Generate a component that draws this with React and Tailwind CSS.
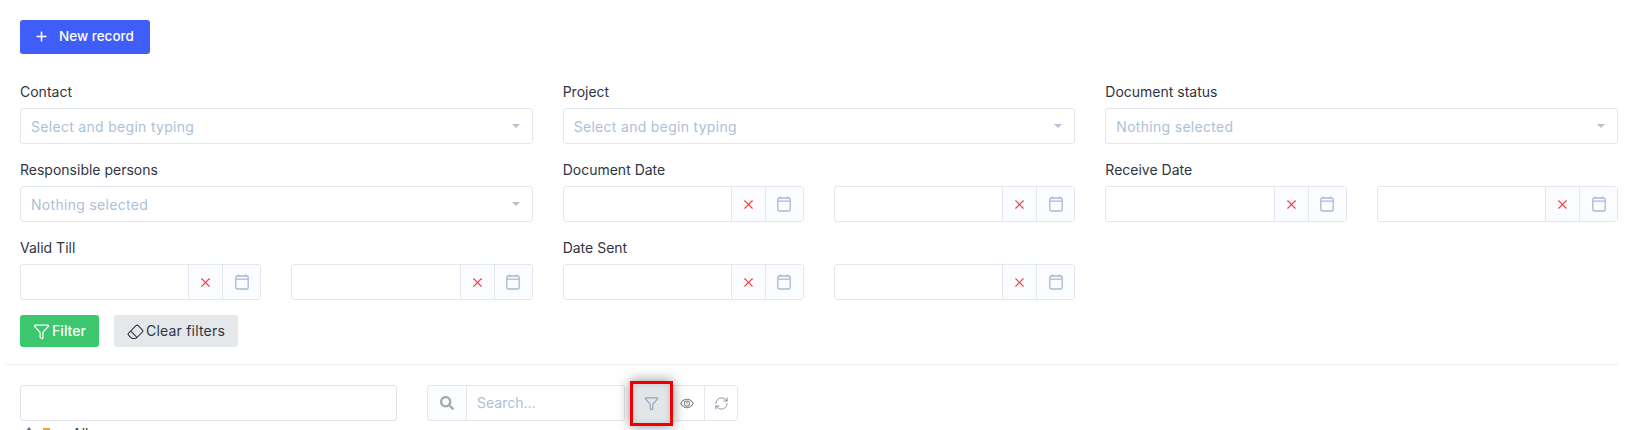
import React from "react";
import { Plus, X, Funnel, RefreshCw } from "lucide-react";
import { BsEraser } from "react-icons/bs";
import { FaSearch } from "react-icons/fa";

const CalendarIcon = () => (
  <svg width="14" height="16" viewBox="0 0 14 16" fill="none" stroke="#a9b8d4" strokeWidth="1.3">
    <rect x="0.8" y="2" width="12.4" height="13" rx="1.6" />
    <path d="M1 5.2h12M3.5 0.5v2M10.5 0.5v2" />
  </svg>
);

const EyeIcon = () => (
  <svg width="14" height="11" viewBox="0 0 15 12" fill="none" stroke="#7b828e" strokeWidth="1.1">
    <path d="M0.7 6C2.5 2.8 4.8 1.4 7.5 1.4s5 1.4 6.8 4.6c-1.8 3.2-4.1 4.6-6.8 4.6S2.5 9.2 0.7 6z" />
    <circle cx="7.5" cy="6" r="2.8" />
    <path d="M7.5 4v2.4" />
  </svg>
);

const Label = ({ children }) => (
  <label className="block h-[26px] text-sm leading-5 text-[#2f3542]">{children}</label>
);

const SelectBox = ({ text }) => (
  <div className="flex h-9 items-center justify-between rounded-[3px] border border-[#e3e8ee] bg-white pl-2.5 pr-3">
    <span className="pt-0.5 text-sm tracking-[0.3px] text-[#aebfd6]">{text}</span>
    <span className="h-0 w-0 border-x-[4px] border-t-[4px] border-x-transparent border-t-[#b6c2d2]" />
  </div>
);

const DateInput = () => (
  <div className="flex h-9 rounded-[3px] border border-[#e3e8ee] bg-white">
    <div className="flex-1" />
    <div className="flex w-[34px] items-center justify-center border-l border-[#e3e8ee] bg-[#fafcff]">
      <X size={15} color="#f4433f" strokeWidth={1.7} />
    </div>
    <div className="flex w-[38px] items-center justify-center border-l border-[#e3e8ee] bg-[#fafcff]">
      <CalendarIcon />
    </div>
  </div>
);

const DateRange = () => (
  <div className="grid grid-cols-2 gap-[30px]">
    <DateInput />
    <DateInput />
  </div>
);

const Field = ({ label, children }) => (
  <div className="mb-4">
    <Label>{label}</Label>
    {children}
  </div>
);

export default function App() {
  return (
    <div className="h-[430px] overflow-hidden bg-white font-['Inter','Liberation_Sans',sans-serif]">
      <div className="pl-5 pr-2.5 pt-5">
        <button className="flex h-[34px] w-[130px] items-center rounded-[3px] bg-[#3f5ef8] pb-px pl-[14px] text-[13.5px] font-medium text-white">
          <Plus size={15} strokeWidth={2.4} />
          <span className="ml-[10px]">New record</span>
        </button>

        {/* Filter fields */}
        <div className="mt-7 grid grid-cols-3 gap-x-[30px]">
          <Field label="Contact"><SelectBox text="Select and begin typing" /></Field>
          <Field label="Project"><SelectBox text="Select and begin typing" /></Field>
          <Field label="Document status"><SelectBox text="Nothing selected" /></Field>
          <Field label="Responsible persons"><SelectBox text="Nothing selected" /></Field>
          <Field label="Document Date"><DateRange /></Field>
          <Field label="Receive Date"><DateRange /></Field>
          <Field label="Valid Till"><DateRange /></Field>
          <Field label="Date Sent"><DateRange /></Field>
        </div>

        <div className="-mt-px flex gap-[15px]">
          <button className="flex h-8 w-[79px] items-center justify-center gap-0.5 rounded-[3px] bg-[#3cc76f] text-sm font-medium text-white">
            <Funnel size={17} strokeWidth={1.7} />
            Filter
          </button>
          <button className="flex h-8 w-[124px] items-center justify-center gap-0.5 rounded-[3px] bg-[#e4e8eb] text-sm tracking-[0.2px] text-[#2f3542]">
            <BsEraser size={17} />
            Clear filters
          </button>
        </div>
      </div>

      <div className="ml-[5px] mr-2.5 mt-[17px] border-t border-[#ebedf0]" />

      {/* Table toolbar */}
      <div className="flex items-start pl-5 pt-5">
        <div className="w-[377px]">
          <div className="h-9 rounded-[3px] border border-[#e2e3ea] bg-white" />
          <div className="mt-[3px] flex items-start pl-[5px] text-sm leading-5 text-[#2f3542]">
            <span className="mt-[3px] h-0 w-0 border-x-[4px] border-b-[5px] border-x-transparent border-b-[#6b7280]" />
            <span className="ml-[10px] mt-1 h-3 w-[7px] bg-[#e8a33d]" />
            <span className="ml-[22px]">All</span>
          </div>
        </div>
        <div className="ml-[30px] flex h-9 items-stretch">
          <div className="flex w-[40px] items-center justify-center rounded-l-[3px] border border-[#e3e8ee] bg-[#fafcff]">
            <FaSearch size={14} color="#a3a8ad" />
          </div>
          <div className="flex w-[158px] items-center rounded-r-[3px] border-y border-r border-[#e3e8ee] pl-2.5 text-sm text-[#aebfd6]">
            Search...
          </div>
          <div className="relative ml-[5px] flex w-[43px] items-center justify-center">
            <div className="absolute -bottom-[5px] -top-1 inset-x-0 flex items-center justify-center border-[3px] border-[#ee0000] bg-[#e2e6e9] shadow-[0_0_12px_rgba(0,0,0,0.45),inset_0_0_6px_rgba(0,0,0,0.15)]">
              <Funnel size={15} color="#8ea3bd" strokeWidth={1.8} />
            </div>
          </div>
          <div className="flex w-[31px] items-center justify-center border-y border-[#e3e8ee] pr-[3px]">
            <EyeIcon />
          </div>
          <div className="flex w-[34px] items-center justify-center rounded-r-[3px] border border-[#e3e8ee]">
            <RefreshCw size={15} color="#6b7280" strokeWidth={1.2} />
          </div>
        </div>
      </div>
    </div>
  );
}
